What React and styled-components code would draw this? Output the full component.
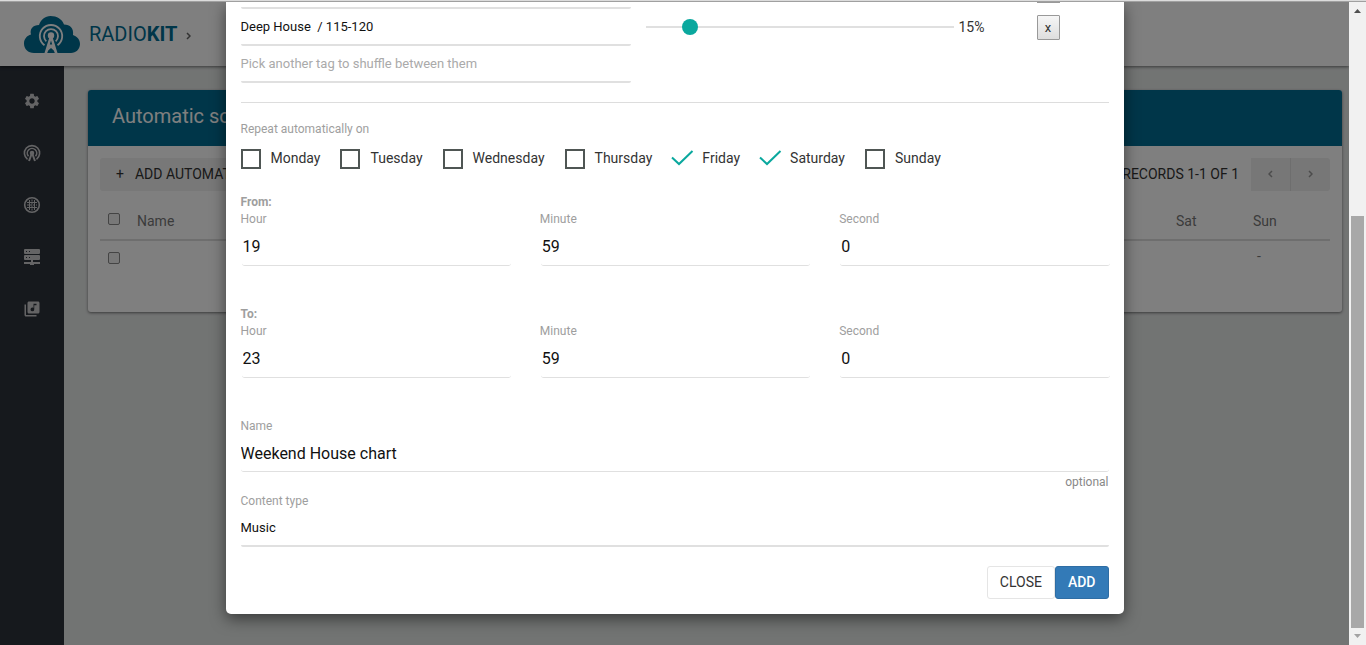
import React, { useState } from "react";
import styled, { createGlobalStyle, css } from "styled-components";
import { MdSettings, MdLibraryMusic } from "react-icons/md";

const Global = createGlobalStyle`
  *, *::before, *::after { box-sizing: border-box; }
  html, body { margin: 0; height: 100%; }
  #root { height: 100%; }
  body { font: 14px/20px Roboto, "Open Sans", sans-serif; color: #333; background: #fff; }
  button, input, select { font: inherit; color: inherit; }
`;

const Frame = styled.div`
  display: grid;
  grid-template-columns: minmax(0, 1fr) 17px;
  height: 100vh;
  padding-top: 1px;
  border-top: 1px solid #dcdcdc;
  background: #a0a0a0;
`;

const Stage = styled.div`
  position: relative;
  display: flex;
  flex-direction: column;
  overflow: hidden;
  background: #e5e8e7;
`;

const TopBar = styled.header`
  position: relative;
  display: flex;
  align-items: center;
  height: 64px;
  padding: 0 24px;
  background: #fff;
  box-shadow: 0 1px 3px rgba(0, 0, 0, 0.5);
`;

const Brand = styled.a`
  display: flex;
  align-items: center;
  gap: 9px;
  color: #006c92;
  font-size: 20px;
  text-decoration: none;
  svg { display: block; }
`;

const Crumb = styled.span`
  display: block;
  margin: 4px 0 0 9px;
  color: #666;
  svg { display: block; }
`;

const Body = styled.div`
  display: flex;
  flex: 1;
`;

const Sidebar = styled.nav`
  display: flex;
  flex-direction: column;
  align-items: center;
  gap: 34px;
  width: 64px;
  padding-top: 26px;
  background: #2c323b;
`;

const NavLink = styled.a`
  display: block;
  height: 18px;
  color: #c8c8ca;
  svg { display: block; }
`;

const Content = styled.main`
  flex: 1;
  padding: 24px 7px 24px 24px;
`;

const Card = styled.section`
  border-radius: 3px;
  background: #fff;
  box-shadow: 0 1px 3px rgba(0, 0, 0, 0.5);
  overflow: hidden;
`;

const CardTitle = styled.h1`
  margin: 0;
  padding: 0 24px 4px;
  background: #006c92;
  color: #fff;
  font-size: 20px;
  font-weight: 400;
  line-height: 52px;
`;

const CardBody = styled.div`
  padding: 12px 12px 34px;
`;

const Tools = styled.div`
  display: flex;
  justify-content: space-between;
  align-items: center;
`;

const ToolButton = styled.button`
  display: flex;
  align-items: center;
  gap: 11px;
  height: 33px;
  padding: 0 15px 2px 16px;
  border: 0;
  border-radius: 3px;
  background: #f0f0f0;
  color: #333;
`;

const Pager = styled.div`
  display: flex;
  align-items: center;
`;

const PagerText = styled.span`
  margin-right: 12px;
  padding-bottom: 2px;
`;

const PagerButton = styled.button`
  display: flex;
  align-items: center;
  justify-content: center;
  width: ${(p) => (p.$divided ? "40px" : "39px")};
  height: 33px;
  padding: 0 0 2px;
  border: 0;
  border-left: ${(p) => (p.$divided ? "1px solid #dcdcdc" : "0")};
  border-radius: ${(p) => (p.$divided ? "0 3px 3px 0" : "0")};
  background: #eee;
  color: #999;
`;

const Table = styled.table`
  width: 100%;
  margin-top: 11px;
  border-collapse: collapse;
  table-layout: fixed;
  th, td { height: 38px; padding: 0; font-weight: 400; text-align: left; color: #777; }
  td { padding-bottom: 2px; }
  th { border-bottom: 2px solid #dcdcdc; }
  th:first-child, td:first-child { width: 37px; padding: 0 0 3px 8px; }
  th:nth-child(3) { width: 77px; }
  th:nth-child(4) { width: 77px; }
  td:last-child { padding: 0 0 8px 4px; }
`;

const RowTick = styled.input`
  display: block;
  appearance: none;
  width: 12px;
  height: 12px;
  margin: 0;
  border: 1px solid #888;
  border-radius: 2px;
  background: #f0f0f0;
`;

const Overlay = styled.div`
  position: absolute;
  inset: 0;
  display: flex;
  justify-content: center;
  align-items: flex-start;
  background: rgba(0, 0, 0, 0.5);
`;

const Dialog = styled.form`
  width: 898px;
  max-width: 100%;
  padding: 0 15px 15px;
  border-radius: 0 0 5px 5px;
  background: #fff;
  box-shadow: 0 5px 15px rgba(0, 0, 0, 0.5);
`;

const TagRow = styled.div`
  display: flex;
  align-items: center;
  height: 37px;
`;

const TagTail = styled.div`
  display: flex;
  align-items: flex-start;
  height: 7px;
`;

const TagBox = styled.div`
  width: 390px;
  height: 100%;
  border-bottom: 2px solid #e0e0e0;
  border-radius: 2px;
`;

const inputReset = css`
  appearance: none;
  display: block;
  width: 100%;
  margin: 0;
  padding: 0;
  border: 0;
  outline: 0;
  border-radius: 2px;
  background: transparent;
`;

const TagInput = styled.input`
  ${inputReset}
  height: 34px;
  font-size: 13px;
  color: #111;
  &::placeholder { color: #aaa; opacity: 1; }
`;

const Slider = styled.input`
  appearance: none;
  width: 308px;
  height: 16px;
  margin: 0 5px 2px 15px;
  background: linear-gradient(#e0e0e0, #e0e0e0) center / 100% 2px no-repeat;
  &::-webkit-slider-thumb {
    appearance: none;
    width: 16px;
    height: 16px;
    border-radius: 50%;
    background: #0aa89e;
  }
`;

const Percent = styled.output`
  width: 78px;
  padding-bottom: 2px;
`;

const RemoveButton = styled.button`
  width: 23px;
  height: 25px;
  padding: 0;
  border: 1px solid #999;
  border-radius: 1px;
  background: linear-gradient(#f6f6f6, #dedede);
  font-size: 13px;
`;

const RemoveTail = styled.span`
  width: 23px;
  height: 1px;
  margin-left: 406px;
  background: #999;
`;

const Divider = styled.hr`
  height: 1px;
  margin: 19px 0 18px;
  border: 0;
  background: #ddd;
`;

const Caption = styled.div`
  color: #9e9e9e;
  font-size: 12px;
  line-height: 17px;
  font-weight: ${(p) => (p.$strong ? 700 : 400)};
`;

const Days = styled.div`
  display: flex;
  flex-wrap: wrap;
  gap: 20px;
  padding: 11px 0 25px;
`;

const Day = styled.label`
  display: flex;
  align-items: center;
  gap: 10px;
`;

const DayName = styled.span`
  margin: -1px 0 1px;
`;

const DayTick = styled.input`
  appearance: none;
  display: block;
  width: 20px;
  height: 20px;
  margin: 0;
  border: 2px solid #4f5654;
  &:checked { border: 0; }
`;

const TickBox = styled.span`
  position: relative;
  display: block;
  width: 20px;
  height: 20px;
  svg { position: absolute; left: 0; top: 0; overflow: visible; pointer-events: none; }
`;

const TimeGroup = styled.fieldset`
  min-width: 0;
  margin: 0 0 40px;
  padding: 0;
  border: 0;
  legend { display: block; padding: 0; }
`;

const TimeGrid = styled.div`
  display: grid;
  grid-template-columns: repeat(3, minmax(0, 1fr));
  gap: 30px;
`;

const Field = styled.label`
  display: block;
  color: #9e9e9e;
  font-size: 12px;
  line-height: 17px;
`;

const FieldInput = styled.input`
  ${inputReset}
  height: ${(p) => (p.$inset ? 38 : 37)}px;
  margin-left: ${(p) => (p.$inset ? 1 : 0)}px;
  padding: 0 ${(p) => (p.$inset ? 1 : 0)}px;
  border-bottom: 1px solid #e0e0e0;
  border-radius: 3px;
  color: #111;
  font-size: 16px;
`;

const FieldSelect = styled.select`
  ${inputReset}
  height: 37px;
  border-bottom: 2px solid #e0e0e0;
  color: #111;
  font-size: 13px;
`;

const Hint = styled.div`
  color: #888;
  font-size: 12px;
  line-height: 21px;
  text-align: right;
`;

const Actions = styled.div`
  display: flex;
  justify-content: flex-end;
  padding-top: 19px;
`;

const ActionButton = styled.button`
  height: 33px;
  padding: 0 12px 2px;
  border: 1px solid ${(p) => (p.$primary ? "#2e6da4" : "#e5e5e5")};
  border-radius: 3px;
  background: ${(p) => (p.$primary ? "#337ab7" : "#fff")};
  color: ${(p) => (p.$primary ? "#fff" : "#333")};
  font-weight: ${(p) => (p.$primary ? 500 : 400)};
`;

const Scrollbar = styled.div`
  display: flex;
  flex-direction: column;
  align-items: center;
  padding: 7px 0;
  background: #f1f1f1;
  svg { display: block; }
`;

const Thumb = styled.div`
  width: 13px;
  flex: 0 0 65.5%;
  margin: auto 0 6px;
  background: #a8a8a8;
`;

const Logo = () => (
  <svg width="56" height="37" viewBox="0 0 56 37" aria-hidden="true">
    <path fill="currentColor" d="M10 37C4 37 0 33 0 27.500C0 23 3 19.500 7 18.500C5.500 13 9 9 15 9C17 3.500 21 0 26.500 0C33 0 38 3 40 8.500C46 8.500 50 12.500 49 19C53.500 20.500 56 24 56 28C56 33 52 37 47 37Z" />
    <g fill="none" stroke="#fff" strokeWidth="1.800">
      <path d="M20.500 29.300A11.200 11.200 0 1 1 33.500 29.300" />
      <path d="M22.300 25.300A7 7 0 1 1 31.700 25.300" />
    </g>
    <circle cx="27" cy="19.500" r="3.200" fill="#fff" />
    <path fill="#fff" fillRule="evenodd" d="M25.800 20H28.200L33.500 37H30.800L29.800 34.500L27 32L24.200 34.500L23.200 37H20.500ZM27 24.500L25.800 28.500H28.200Z" />
  </svg>
);

const Broadcast = () => (
  <svg width="18" height="18" viewBox="0 0 18 18" fill="none" stroke="currentColor" strokeWidth="1.600" aria-hidden="true">
    <path d="M4.500 15.300A7.600 7.600 0 1 1 13.500 15.300" />
    <path d="M5.500 12.300A4.700 4.700 0 1 1 12.500 12.300" />
    <path d="M9 9L6 17M9 9L12 17" strokeWidth="2" />
    <circle cx="9" cy="9" r="1.500" fill="currentColor" />
  </svg>
);

const GridGlobe = () => (
  <svg width="18" height="18" viewBox="0 0 18 18" fill="none" stroke="currentColor" aria-hidden="true">
    <circle cx="9" cy="9" r="7.300" strokeWidth="1.600" />
    <path d="M4 6.500H14M4 11.500H14M6.500 4V14M11.500 4V14" />
    <path d="M4 9H14M9 3.500V14.500" strokeDasharray="2 1" />
  </svg>
);

const Server = () => (
  <svg width="18" height="18" viewBox="0 0 18 18" fill="currentColor" aria-hidden="true">
    <path fillRule="evenodd" d="M2 1H16Q17 1 17 2V5Q17 6 16 6H2Q1 6 1 5V2Q1 1 2 1ZM3 3V4H4V3ZM6 3V4H7V3Z" />
    <path fillRule="evenodd" d="M2 7H16Q17 7 17 8V11Q17 12 16 12H2Q1 12 1 11V8Q1 7 2 7ZM3 9V10H4V9ZM6 9V10H7V9Z" />
    <path d="M8 12H10V14H11V14H17V16H11V17H7V16H1V14H8Z" />
  </svg>
);

const Chevron = ({ flip }) => (
  <svg width="5" height="8" viewBox="0 0 5 8" fill="none" stroke="currentColor" strokeWidth="1.500" aria-hidden="true">
    <path d={flip ? "M4 1L1 4L4 7" : "M1 1L4 4L1 7"} />
  </svg>
);

const DAYS = ["Monday", "Tuesday", "Wednesday", "Thursday", "Friday", "Saturday", "Sunday"];

function DayOption({ name, initial }) {
  const [on, setOn] = useState(initial);
  return (
    <Day>
      <TickBox>
        <DayTick type="checkbox" checked={on} onChange={() => setOn(!on)} />
        {on && (
          <svg width="20" height="20" fill="none" stroke="#0aa89e" strokeWidth="2">
            <path d="M0 8.500L7 15L20.500 2" />
          </svg>
        )}
      </TickBox>
      <DayName>{name}</DayName>
    </Day>
  );
}

function TimeFields({ title, values }) {
  return (
    <TimeGroup>
      <Caption as="legend" $strong>{title}</Caption>
      <TimeGrid>
        {["Hour", "Minute", "Second"].map((unit, i) => (
          <Field key={unit}>
            {unit}
            <FieldInput $inset defaultValue={values[i]} />
          </Field>
        ))}
      </TimeGrid>
    </TimeGroup>
  );
}

function ScheduleDialog() {
  return (
    <Dialog role="dialog" aria-label="Schedule" onSubmit={(e) => e.preventDefault()}>
      <TagTail>
        <TagBox />
        <RemoveTail />
      </TagTail>
      <TagRow>
        <TagBox>
          <TagInput aria-label="Tag" defaultValue={"Deep House \u00a0/ 115-120"} />
        </TagBox>
        <Slider type="range" aria-label="Share" min="0" max="120" defaultValue="15" />
        <Percent>15%</Percent>
        <RemoveButton type="button">x</RemoveButton>
      </TagRow>
      <TagRow>
        <TagBox>
          <TagInput aria-label="Another tag" placeholder="Pick another tag to shuffle between them" />
        </TagBox>
      </TagRow>
      <Divider />
      <Caption>Repeat automatically on</Caption>
      <Days>
        {DAYS.map((day) => (
          <DayOption key={day} name={day} initial={day === "Friday" || day === "Saturday"} />
        ))}
      </Days>
      <TimeFields title="From:" values={["19", "59", "0"]} />
      <TimeFields title="To:" values={["23", "59", "0"]} />
      <Field>
        Name
        <FieldInput defaultValue="Weekend House chart" />
      </Field>
      <Hint>optional</Hint>
      <Field>
        Content type
        <FieldSelect defaultValue="Music">
          <option>Music</option>
        </FieldSelect>
      </Field>
      <Actions>
        <ActionButton type="button">CLOSE</ActionButton>
        <ActionButton type="submit" $primary>ADD</ActionButton>
      </Actions>
    </Dialog>
  );
}

export default function App() {
  return (
    <>
      <Global />
      <Frame>
        <Stage>
          <TopBar>
            <Brand href="#">
              <Logo />
              <span>RADIO<b>KIT</b></span>
            </Brand>
            <Crumb><Chevron /></Crumb>
          </TopBar>
          <Body>
            <Sidebar>
              <NavLink href="#" aria-label="Settings"><MdSettings size={18} /></NavLink>
              <NavLink href="#" aria-label="Broadcast"><Broadcast /></NavLink>
              <NavLink href="#" aria-label="Network"><GridGlobe /></NavLink>
              <NavLink href="#" aria-label="Servers"><Server /></NavLink>
              <NavLink href="#" aria-label="Library"><MdLibraryMusic size={18} /></NavLink>
            </Sidebar>
            <Content>
              <Card>
                <CardTitle>Automatic sc</CardTitle>
                <CardBody>
                  <Tools>
                    <ToolButton><span>+</span><span>ADD AUTOMAT</span></ToolButton>
                    <Pager>
                      <PagerText>RECORDS 1-1 OF 1</PagerText>
                      <PagerButton aria-label="Previous"><Chevron flip /></PagerButton>
                      <PagerButton aria-label="Next" $divided><Chevron /></PagerButton>
                    </Pager>
                  </Tools>
                  <Table>
                    <thead>
                      <tr>
                        <th><RowTick type="checkbox" aria-label="Select all" /></th>
                        <th>Name</th>
                        <th>Sat</th>
                        <th>Sun</th>
                      </tr>
                    </thead>
                    <tbody>
                      <tr>
                        <td><RowTick type="checkbox" aria-label="Select row" /></td>
                        <td />
                        <td />
                        <td>-</td>
                      </tr>
                    </tbody>
                  </Table>
                </CardBody>
              </Card>
            </Content>
          </Body>
          <Overlay>
            <ScheduleDialog />
          </Overlay>
        </Stage>
        <Scrollbar aria-hidden="true">
          <svg width="7" height="4"><path d="M0 4L3.500 0L7 4Z" fill="#505050" /></svg>
          <Thumb />
          <svg width="7" height="4"><path d="M0 0L3.500 4L7 0Z" fill="#a3a3a3" /></svg>
        </Scrollbar>
      </Frame>
    </>
  );
}
